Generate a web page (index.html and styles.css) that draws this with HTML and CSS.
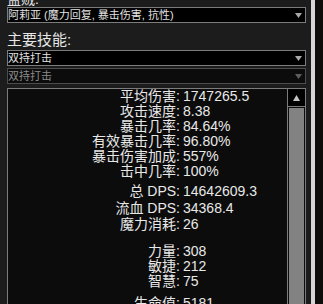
FILE: index.html
```html
<!DOCTYPE html>
<html lang="zh">
<head>
<meta charset="utf-8">
<link rel="stylesheet" href="styles.css">
</head>
<body>
<div class="app">
  <main class="panel">
    <div class="top-label">盗贼:</div>
    <div class="select">
      <span class="select-text">阿莉亚 (魔力回复, 暴击伤害, 抗性)</span>
      <svg class="caret" width="7" height="5" viewBox="0 0 7 5"><polygon points="0,0 7,0 3.5,5"/></svg>
    </div>
    <div class="heading">主要技能:</div>
    <div class="select">
      <span class="select-text">双持打击</span>
      <svg class="caret" width="7" height="5" viewBox="0 0 7 5"><polygon points="0,0 7,0 3.5,5"/></svg>
    </div>
    <div class="select disabled">
      <span class="select-text">双持打击</span>
      <svg class="caret" width="7" height="5" viewBox="0 0 7 5"><polygon points="0,0 7,0 3.5,5"/></svg>
    </div>
    <div class="stats">
      <div class="stat-list">
        <div class="row"><span class="k">平均伤害:</span><span class="v">1747265.5</span></div>
        <div class="row"><span class="k">攻击速度:</span><span class="v">8.38</span></div>
        <div class="row"><span class="k">暴击几率:</span><span class="v">84.64%</span></div>
        <div class="row"><span class="k">有效暴击几率:</span><span class="v">96.80%</span></div>
        <div class="row"><span class="k">暴击伤害加成:</span><span class="v">557%</span></div>
        <div class="row"><span class="k">击中几率:</span><span class="v">100%</span></div>
        <div class="row gap-5"><span class="k">总 DPS:</span><span class="v">14642609.3</span></div>
        <div class="row gap-2"><span class="k">流血 DPS:</span><span class="v">34368.4</span></div>
        <div class="row gap-1"><span class="k">魔力消耗:</span><span class="v">26</span></div>
        <div class="row gap-12"><span class="k">力量:</span><span class="v">308</span></div>
        <div class="row"><span class="k">敏捷:</span><span class="v">212</span></div>
        <div class="row"><span class="k">智慧:</span><span class="v">75</span></div>
        <div class="row gap-7"><span class="k">生命值:</span><span class="v">5181</span></div>
      </div>
      <div class="scrollbar">
        <div class="scroll-btn">
          <svg width="7" height="6" viewBox="0 0 7 6"><polygon points="3.5,0 7,6 0,6"/></svg>
        </div>
        <div class="thumb"></div>
      </div>
    </div>
  </main>
  <div class="strip-light"></div>
  <div class="strip-dark"></div>
</div>
</body>
</html>
```

FILE: styles.css
```css
html, body {
  margin: 0;
  padding: 0;
  background: #1c1c1c;
}

body {
  font-family: "Liberation Sans", "Noto Sans CJK SC", sans-serif;
  color: #e6e6e6;
}

.app {
  display: flex;
  height: 304px;
  overflow: hidden;
}

.panel {
  width: 311px;
  flex: none;
  box-sizing: border-box;
  padding-left: 7px;
  background: #1c1c1c;
}

.top-label {
  margin-top: -9px;
  height: 16px;
  line-height: 16px;
  font-size: 14px;
  color: #e0e0e0;
}

.select {
  box-sizing: border-box;
  width: 299px;
  height: 16px;
  border: 1px solid #7c7c7c;
  background: #000;
  display: flex;
  align-items: center;
  justify-content: space-between;
  padding: 0 2px 0 0;
}

.select + .select {
  margin-top: 2px;
}

.select-text {
  font-size: 11px;
  line-height: 14px;
  color: #e2e2e2;
  white-space: nowrap;
}

.caret {
  display: block;
  fill: #a8a8a8;
  margin-right: 1px;
}

.select.disabled {
  border-color: #4c4c4c;
  background: #0c0c0c;
}

.select.disabled .select-text {
  color: #8a8a8a;
}

.select.disabled .caret {
  fill: #5e5e5e;
}

.heading {
  box-sizing: border-box;
  height: 27px;
  padding-top: 9px;
  line-height: 16px;
  font-size: 15px;
  color: #e6e6e6;
}

.stats {
  margin-top: 4px;
  box-sizing: border-box;
  width: 299px;
  height: 240px;
  border: 1px solid #7c7c7c;
  background: #0c0c0c;
  display: flex;
}

.stat-list {
  flex: 1;
  font-size: 14px;
}

.row {
  display: grid;
  grid-template-columns: 172px 1fr;
  column-gap: 3px;
  height: 15px;
  line-height: 15px;
  white-space: nowrap;
  color: #e8e8e8;
}

.row .k {
  text-align: right;
}

.gap-1 { margin-top: 1px; }
.gap-2 { margin-top: 2px; }
.gap-5 { margin-top: 5px; }
.gap-7 { margin-top: 7px; }
.gap-12 { margin-top: 12px; }

.scrollbar {
  width: 17px;
  flex: none;
  border-left: 1px solid #7c7c7c;
  display: flex;
  flex-direction: column;
}

.scroll-btn {
  height: 17px;
  border-bottom: 1px solid #7c7c7c;
  display: flex;
  align-items: center;
  justify-content: center;
  background: #000;
}

.scroll-btn svg {
  display: block;
  fill: #c4c4c4;
}

.thumb {
  flex: 1;
  margin: 1px 1px 0 1px;
  background: #828282;
}

.strip-light {
  width: 4px;
  flex: none;
  background: #d6d6d6;
}

.strip-dark {
  width: 8px;
  flex: none;
  background: #0f0c0c;
}
```
